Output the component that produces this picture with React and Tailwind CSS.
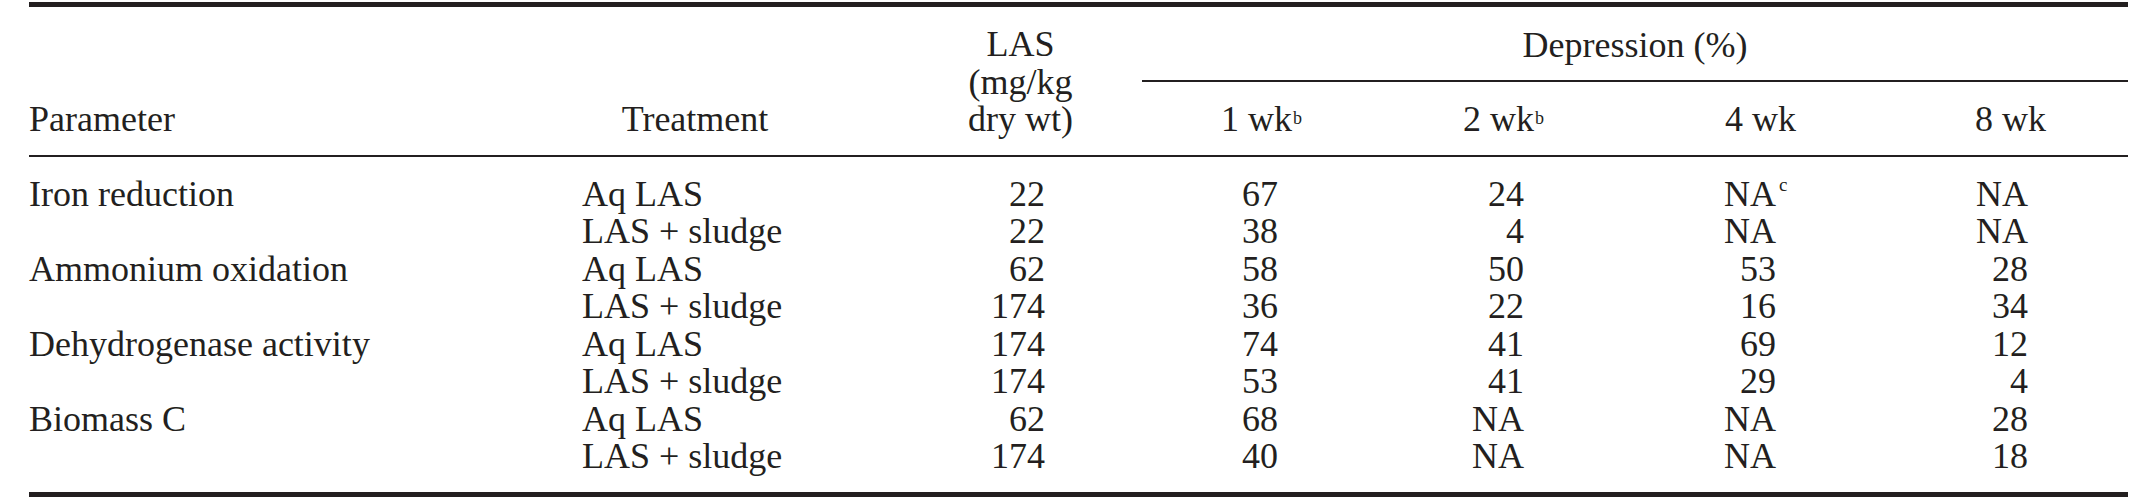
import React from "react";

// Depression of soil microbial activity after LAS application
const groups = [
  {
    parameter: "Iron reduction",
    rows: [
      { treatment: "Aq LAS", las: "22", weeks: ["67", "24", "NA", "NA"], note: true },
      { treatment: "LAS + sludge", las: "22", weeks: ["38", "4", "NA", "NA"] },
    ],
  },
  {
    parameter: "Ammonium oxidation",
    rows: [
      { treatment: "Aq LAS", las: "62", weeks: ["58", "50", "53", "28"] },
      { treatment: "LAS + sludge", las: "174", weeks: ["36", "22", "16", "34"] },
    ],
  },
  {
    parameter: "Dehydrogenase activity",
    rows: [
      { treatment: "Aq LAS", las: "174", weeks: ["74", "41", "69", "12"] },
      { treatment: "LAS + sludge", las: "174", weeks: ["53", "41", "29", "4"] },
    ],
  },
  {
    parameter: "Biomass C",
    rows: [
      { treatment: "Aq LAS", las: "62", weeks: ["68", "NA", "NA", "28"] },
      { treatment: "LAS + sludge", las: "174", weeks: ["40", "NA", "NA", "18"] },
    ],
  },
];

// column widths and right padding for the four week columns
const weekCols = [
  { w: "w-[248px]", pr: "pr-[112px]" },
  { w: "w-[250px]", pr: "pr-[116px]" },
  { w: "w-[250px]", pr: "pr-[114px]" },
  { w: "w-[238px]", pr: "pr-[100px]" },
];

const Sup = ({ children }) => (
  <span className="relative -top-[7px] ml-[1px] text-[18px] leading-none">{children}</span>
);

const DataRow = ({ parameter, row }) => (
  <div className="flex">
    <div className="w-[553px]">{parameter}</div>
    <div className="w-[226px]">{row.treatment}</div>
    <div className="w-[334px] pr-[97px] text-right">{row.las}</div>
    {row.weeks.map((value, i) => (
      <div key={i} className={`${weekCols[i].w} ${weekCols[i].pr} text-right`}>
        {value}
        {row.note && i === 2 && (
          <span className="inline-block w-0 overflow-visible whitespace-nowrap">
            <span className="relative -top-[15px] ml-[3px] text-[19px] leading-none">c</span>
          </span>
        )}
      </div>
    ))}
  </div>
);

export default function App() {
  return (
    <div className="w-[2132px] h-[497px] bg-white pt-[2px] pl-[29px] pr-[4px] font-['Liberation_Serif',serif] text-[36px] leading-[37.5px] text-[#231f20]">
      <div className="border-t-[5px] border-b-[5px] border-[#231f20]">
        <div className="flex items-end pt-[19px] pb-4 border-b-2 border-[#231f20]">
          <div className="w-[553px]">Parameter</div>
          <div className="w-[226px] text-center">Treatment</div>
          <div className="w-[334px] pr-[69px] text-right">
            <div className="inline-block text-center">
              <div>LAS</div>
              <div>(mg/kg</div>
              <div>dry wt)</div>
            </div>
          </div>
          <div className="flex flex-col w-[986px]">
            <div className="pb-4 border-b-2 border-[#231f20] text-center">Depression (%)</div>
            <div className="flex pt-[19px]">
              <div className="w-[248px] pr-[88px] text-right">
                1 wk<Sup>b</Sup>
              </div>
              <div className="w-[250px] pr-[96px] text-right">
                2 wk<Sup>b</Sup>
              </div>
              <div className="w-[250px] pr-[94px] text-right">4 wk</div>
              <div className="w-[238px] pr-[82px] text-right">8 wk</div>
            </div>
          </div>
        </div>
        <div className="pt-[19px] pb-4">
          {groups.map((group) =>
            group.rows.map((row, j) => (
              <DataRow
                key={group.parameter + j}
                parameter={j === 0 ? group.parameter : ""}
                row={row}
              />
            ))
          )}
        </div>
      </div>
    </div>
  );
}
